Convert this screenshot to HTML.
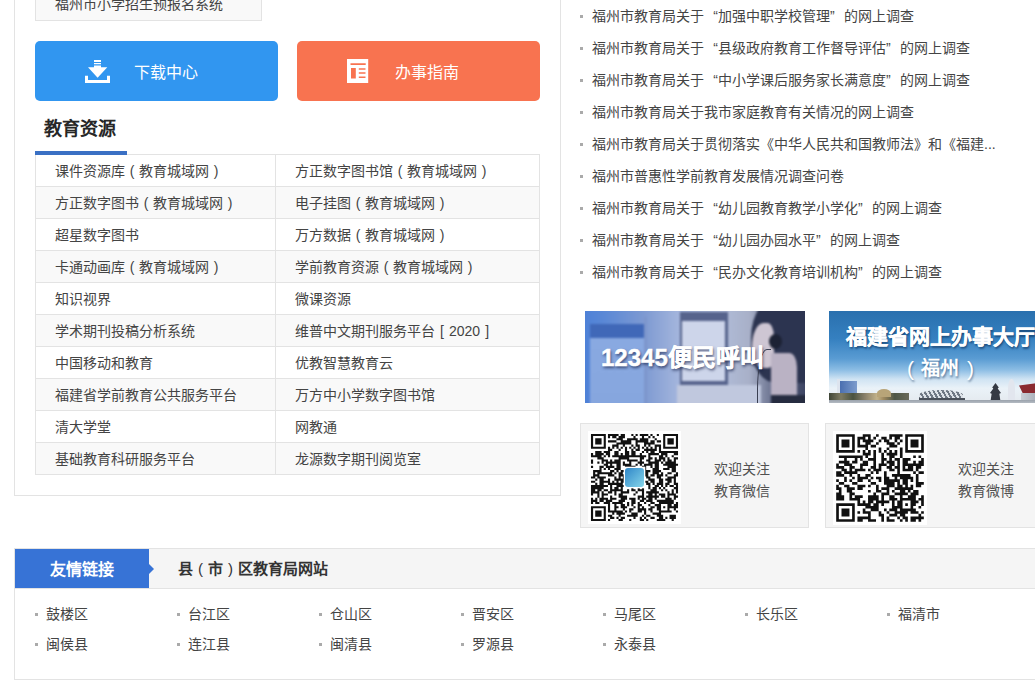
<!DOCTYPE html>
<html lang="zh-CN">
<head>
<meta charset="utf-8">
<style>
*{margin:0;padding:0;box-sizing:border-box}
html,body{width:1035px;height:681px;overflow:hidden;background:#fff}
body{position:relative;font-family:"Liberation Sans",sans-serif;font-size:14px;color:#444}
.p{display:inline-block;width:14px;text-align:center}
.p15{display:inline-block;width:15px;text-align:center;font-weight:normal}
.abs{position:absolute}
.q{display:inline-block;width:14px}
.ql{text-align:right}
.qr{text-align:left}
/* left panel */
#lp{left:14px;top:-20px;width:547px;height:516px;border:1px solid #e3e3e3}
#topbox{left:35px;top:-12px;width:227px;height:33px;border:1px solid #e3e3e3;border-top:none;background:#f9f9f9;line-height:32px;padding-left:19px}
.btn{top:41px;width:243px;height:60px;border-radius:5px;color:#fff;font-size:16px;line-height:60px}
#b1{left:35px;background:#3196f0}
#b2{left:297px;background:#f87350}
#b1 span{position:absolute;left:99px;top:2px}
#b2 span{position:absolute;left:98px;top:2px}
#h1{left:44px;top:115px;font-size:18px;font-weight:bold;line-height:28px;color:#262626}
#hbar{left:35px;top:151px;width:92px;height:4px;background:#3a70c4}
#tbl{left:35px;top:154px;width:505px;border-collapse:collapse}
#tbl td{height:32px;border:1px solid #e3e3e3;padding:1px 0 0 19px;line-height:30px;white-space:nowrap}
#tbl td.c1{width:240px}
#tbl tr:nth-child(even) td{background:#f9f9f9}
/* right list */
#rl{left:580px;top:0;width:420px}
#rl li{list-style:none;position:relative;height:32px;line-height:32px;padding-left:12px;white-space:nowrap;width:440px}
#rl li:before{content:"";position:absolute;left:0;top:15px;width:3px;height:3px;background:#aaa}
/* banners */
.ban{top:311px;width:220px;height:92px;overflow:hidden}
#ban1{left:585px}
#ban2{left:829px}
.qrb{top:423px;width:229px;height:105px;border:1px solid #e3e3e3;background:#f5f5f5}
#qrb1{left:580px}
#qrb2{left:825px}
.qrb svg{position:absolute;left:6.8px;top:6.8px}
.qrb .t{position:absolute;left:133px;top:33.5px;line-height:22px;font-size:14px;color:#505050}
/* friend links */
#fl{left:14px;top:548px;width:1100px;height:132px;border:1px solid #e3e3e3}
#flh{left:0;top:0;width:100%;height:40px;background:#f5f5f5;border-bottom:1px solid #e3e3e3}
#fltab{left:0;top:0;width:134px;height:39px;background:#3773d6;color:#fff;font-size:16px;font-weight:bold;line-height:41px;text-align:center}
#fltab:after{content:"";position:absolute;right:-5px;top:15px;border-left:5px solid #3773d6;border-top:5px solid transparent;border-bottom:5px solid transparent}
#flt{left:163px;top:0;line-height:40px;font-size:15px;font-weight:bold;color:#333}
.lk{position:absolute;line-height:30px;padding-left:11px;white-space:nowrap}
.lk:before{content:"";position:absolute;left:0;top:14px;width:3px;height:3px;background:#aaa}
</style>
</head>
<body>
<div class="abs" id="lp"></div>
<div class="abs" id="topbox">福州市小学招生预报名系统</div>

<div class="abs btn" id="b1">
<svg class="abs" style="left:49px;top:17px" width="28" height="26" viewBox="0 0 28 26">
<path fill="#fff" d="M10 2h7v2h-7zM10 5h7v1.3h-7zM10 7.4h7v1.9h6.3l-9.7 10.5-9.6-10.5h6zM1 17.8h3v4.2h19v-4.2h3v7.2h-25z"/>
</svg>
<span>下载中心</span></div>
<div class="abs btn" id="b2">
<svg class="abs" style="left:50px;top:18px" width="22" height="24" viewBox="0 0 22 24">
<path fill="#fff" fill-rule="evenodd" d="M0 0h21.2v24h-21.2zM3.5 4.3h15.2v1.7h-15.2zM4 9h4.8v10.5h-4.8zM11.8 9.2h6.7v1.5h-6.7zM11.8 13.3h6.7v1.5h-6.7zM11.8 17.6h6.7v1.5h-6.7z"/>
</svg>
<span>办事指南</span></div>

<div class="abs" id="h1">教育资源</div>
<table class="abs" id="tbl">
<tr><td class="c1">课件资源库<span class="p">(</span>教育城域网<span class="p">)</span></td><td>方正数字图书馆<span class="p">(</span>教育城域网<span class="p">)</span></td></tr>
<tr><td class="c1">方正数字图书<span class="p">(</span>教育城域网<span class="p">)</span></td><td>电子挂图<span class="p">(</span>教育城域网<span class="p">)</span></td></tr>
<tr><td class="c1">超星数字图书</td><td>万方数据<span class="p">(</span>教育城域网<span class="p">)</span></td></tr>
<tr><td class="c1">卡通动画库<span class="p">(</span>教育城域网<span class="p">)</span></td><td>学前教育资源<span class="p">(</span>教育城域网<span class="p">)</span></td></tr>
<tr><td class="c1">知识视界</td><td>微课资源</td></tr>
<tr><td class="c1">学术期刊投稿分析系统</td><td>维普中文期刊服务平台<span class="p">[</span>2020<span class="p">]</span></td></tr>
<tr><td class="c1">中国移动和教育</td><td>优教智慧教育云</td></tr>
<tr><td class="c1">福建省学前教育公共服务平台</td><td>万方中小学数字图书馆</td></tr>
<tr><td class="c1">清大学堂</td><td>网教通</td></tr>
<tr><td class="c1">基础教育科研服务平台</td><td>龙源数字期刊阅览室</td></tr>
</table>
<div class="abs" id="hbar"></div>

<ul class="abs" id="rl">
<li>福州市教育局关于<span class="q ql">“</span>加强中职学校管理<span class="q qr">”</span>的网上调查</li>
<li>福州市教育局关于<span class="q ql">“</span>县级政府教育工作督导评估<span class="q qr">”</span>的网上调查</li>
<li>福州市教育局关于<span class="q ql">“</span>中小学课后服务家长满意度<span class="q qr">”</span>的网上调查</li>
<li>福州市教育局关于我市家庭教育有关情况的网上调查</li>
<li>福州市教育局关于贯彻落实《中华人民共和国教师法》和《福建...</li>
<li>福州市普惠性学前教育发展情况调查问卷</li>
<li>福州市教育局关于<span class="q ql">“</span>幼儿园教育教学小学化<span class="q qr">”</span>的网上调查</li>
<li>福州市教育局关于<span class="q ql">“</span>幼儿园办园水平<span class="q qr">”</span>的网上调查</li>
<li>福州市教育局关于<span class="q ql">“</span>民办文化教育培训机构<span class="q qr">”</span>的网上调查</li>
</ul>

<div class="abs ban" id="ban1">
<div style="position:absolute;left:-4px;top:-4px;width:228px;height:100px;filter:blur(1.3px)">
<div style="position:absolute;left:0;top:0;width:228px;height:100px;background:linear-gradient(90deg,#4c80d8 0%,#5a88d6 10%,#7e9ad2 28%,#a2b4dc 42%,#b0bcd8 62%,#a8b0c8 74%,#5c6482 86%,#3a4260 100%)"></div>
<div style="position:absolute;left:9px;top:17px;width:54px;height:83px;background:linear-gradient(180deg,#8aaae2,#86a6de)"></div>
<div style="position:absolute;left:9px;top:17px;width:54px;height:14px;background:#4068b8"></div>
<div style="position:absolute;left:63px;top:10px;width:3px;height:90px;background:#7d96cc"></div>
<div style="position:absolute;left:99px;top:5px;width:48px;height:73px;background:#56638c"></div>
<div style="position:absolute;left:101px;top:14px;width:43px;height:60px;background:#cdd5ea"></div>
<div style="position:absolute;left:96px;top:78px;width:84px;height:22px;background:#c0c8de"></div>
<div style="position:absolute;left:170px;top:-14px;width:64px;height:90px;background:#2c3450;border-radius:50% 0 0 40%"></div>
<div style="position:absolute;left:171px;top:16px;width:22px;height:45px;background:#cec6d3;border-radius:60% 35% 30% 55%"></div>
<div style="position:absolute;left:190px;top:46px;width:26px;height:46px;background:#bab2c4;border-radius:0 30% 0 0"></div>
<div style="position:absolute;left:188px;top:27px;width:13px;height:15px;background:#1c2234;border-radius:50%"></div>
<div style="position:absolute;left:190px;top:88px;width:40px;height:12px;background:#262c40"></div>
</div>
<div style="position:absolute;left:172px;top:38px;width:14px;height:58px;border-left:1.5px solid #3a3f52;border-top:1.5px solid #3a3f52;border-radius:70% 0 0 0;filter:blur(.4px)"></div>
<div style="position:absolute;left:16px;top:29px;font-size:24px;font-weight:bold;color:#fff;line-height:36px;white-space:nowrap;text-shadow:1px 2px 3px rgba(20,30,70,.7);-webkit-text-stroke:.4px #fff">12345便民呼叫</div>

</div>
<div class="abs ban" id="ban2">
<div style="position:absolute;left:0;top:0;width:220px;height:92px;background:linear-gradient(180deg,#2a70ae 0%,#3580c0 30%,#5a9cd3 52%,#8cbde4 64%,#cfe3f3 74%,#eaf2f8 84%,#e4e9ee 100%)"></div>
<div style="position:absolute;left:-4px;top:60px;width:228px;height:36px;filter:blur(.7px)">
<div style="position:absolute;left:12px;top:8px;width:3px;height:16px;background:#dde4ee"></div>
<div style="position:absolute;left:15px;top:10px;width:17px;height:15px;background:linear-gradient(90deg,#4a6fb0,#7d9ccc)"></div>
<div style="position:absolute;left:4px;top:22px;width:80px;height:8px;background:linear-gradient(90deg,#3f4536 0%,#7d7a62 15%,#4a5240 30%,#8a806a 45%,#c2b28a 60%,#a08a60 68%,#4e5646 82%,#6a6a5a 100%)"></div>
<div style="position:absolute;left:52px;top:18px;width:14px;height:8px;background:#b8a478;border-radius:50% 50% 0 0"></div>
<div style="position:absolute;left:94px;top:19px;width:44px;height:10px;background:repeating-linear-gradient(60deg,#6f7884 0 2px,#dde2e8 2px 4px);border-radius:50% 50% 25% 25%"></div>
<div style="position:absolute;left:94px;top:27px;width:46px;height:3px;background:#4a505a"></div>
<div style="position:absolute;left:165px;top:12px;width:11px;height:18px;background:#353a44;clip-path:polygon(50% 0,80% 25%,70% 30%,100% 55%,85% 60%,95% 100%,5% 100%,15% 60%,0 55%,30% 30%,20% 25%)"></div>
<div style="position:absolute;left:183px;top:8px;width:7px;height:22px;background:#e2e6ee;border-radius:45% 45% 10% 10%"></div>
<div style="position:absolute;left:194px;top:10px;width:34px;height:13px;background:#8a2a30;clip-path:polygon(0 35%,100% 0,100% 80%,12% 100%)"></div>
<div style="position:absolute;left:196px;top:22px;width:30px;height:8px;background:linear-gradient(90deg,#c9ced6,#8c939e)"></div>
<div style="position:absolute;left:0;top:29px;width:228px;height:7px;background:linear-gradient(180deg,#9aa2ac,#d6dbe0)"></div>
</div>
<div style="position:absolute;left:17px;top:13px;font-size:21px;font-weight:bold;color:#fff;line-height:26px;white-space:nowrap;text-shadow:1px 2px 2px rgba(10,40,80,.6);-webkit-text-stroke:.3px #fff">福建省网上办事大厅</div>
<div style="position:absolute;left:78px;top:45px;font-size:21px;font-weight:normal;color:#fff;line-height:26px;white-space:nowrap;text-shadow:1px 2px 2px rgba(10,40,80,.45)">(</div>
<div style="position:absolute;left:92px;top:45px;font-size:19px;font-weight:bold;color:#fff;line-height:26px;white-space:nowrap;text-shadow:1px 2px 2px rgba(10,40,80,.45)">福州</div>
<div style="position:absolute;left:138px;top:45px;font-size:21px;font-weight:normal;color:#fff;line-height:26px;white-space:nowrap;text-shadow:1px 2px 2px rgba(10,40,80,.45)">)</div>

</div>

<div class="abs qrb" id="qrb1">
<svg width="93" height="93" viewBox="-1.4 -1.4 43.8 43.8"><rect x="-1.4" y="-1.4" width="43.8" height="43.8" fill="#fff"/><path fill="#111" d="M0 0h7v1h-7zM8 0h5v1h-5zM14 0h2v1h-2zM19 0h1v1h-1zM21 0h1v1h-1zM23 0h4v1h-4zM28 0h1v1h-1zM31 0h1v1h-1zM34 0h7v1h-7zM0 1h1v1h-1zM6 1h1v1h-1zM8 1h1v1h-1zM10 1h2v1h-2zM13 1h3v1h-3zM20 1h1v1h-1zM24 1h1v1h-1zM27 1h1v1h-1zM29 1h1v1h-1zM34 1h1v1h-1zM40 1h1v1h-1zM0 2h1v1h-1zM2 2h3v1h-3zM6 2h1v1h-1zM12 2h3v1h-3zM17 2h5v1h-5zM23 2h4v1h-4zM30 2h1v1h-1zM34 2h1v1h-1zM36 2h3v1h-3zM40 2h1v1h-1zM0 3h1v1h-1zM2 3h3v1h-3zM6 3h1v1h-1zM8 3h4v1h-4zM14 3h5v1h-5zM21 3h6v1h-6zM28 3h2v1h-2zM31 3h2v1h-2zM34 3h1v1h-1zM36 3h3v1h-3zM40 3h1v1h-1zM0 4h1v1h-1zM2 4h3v1h-3zM6 4h1v1h-1zM12 4h7v1h-7zM21 4h1v1h-1zM25 4h5v1h-5zM34 4h1v1h-1zM36 4h3v1h-3zM40 4h1v1h-1zM0 5h1v1h-1zM6 5h1v1h-1zM10 5h3v1h-3zM15 5h1v1h-1zM19 5h1v1h-1zM21 5h2v1h-2zM25 5h1v1h-1zM27 5h1v1h-1zM30 5h3v1h-3zM34 5h1v1h-1zM40 5h1v1h-1zM0 6h7v1h-7zM8 6h1v1h-1zM10 6h1v1h-1zM12 6h1v1h-1zM14 6h1v1h-1zM16 6h1v1h-1zM18 6h1v1h-1zM20 6h1v1h-1zM22 6h1v1h-1zM24 6h1v1h-1zM26 6h1v1h-1zM28 6h1v1h-1zM30 6h1v1h-1zM32 6h1v1h-1zM34 6h7v1h-7zM8 7h2v1h-2zM13 7h1v1h-1zM16 7h1v1h-1zM19 7h1v1h-1zM21 7h2v1h-2zM25 7h6v1h-6zM32 7h1v1h-1zM2 8h3v1h-3zM6 8h3v1h-3zM11 8h2v1h-2zM16 8h2v1h-2zM19 8h2v1h-2zM24 8h1v1h-1zM26 8h1v1h-1zM28 8h2v1h-2zM32 8h9v1h-9zM0 9h1v1h-1zM2 9h4v1h-4zM7 9h2v1h-2zM11 9h2v1h-2zM14 9h1v1h-1zM16 9h2v1h-2zM19 9h2v1h-2zM23 9h1v1h-1zM27 9h5v1h-5zM33 9h3v1h-3zM39 9h2v1h-2zM0 10h5v1h-5zM6 10h1v1h-1zM8 10h1v1h-1zM10 10h16v1h-16zM27 10h1v1h-1zM32 10h2v1h-2zM35 10h1v1h-1zM38 10h1v1h-1zM3 11h3v1h-3zM13 11h5v1h-5zM23 11h2v1h-2zM27 11h2v1h-2zM30 11h1v1h-1zM32 11h3v1h-3zM36 11h1v1h-1zM39 11h2v1h-2zM0 12h1v1h-1zM5 12h3v1h-3zM9 12h1v1h-1zM11 12h3v1h-3zM17 12h5v1h-5zM23 12h1v1h-1zM26 12h2v1h-2zM30 12h3v1h-3zM34 12h1v1h-1zM36 12h2v1h-2zM39 12h1v1h-1zM0 13h1v1h-1zM3 13h1v1h-1zM5 13h1v1h-1zM7 13h7v1h-7zM15 13h1v1h-1zM18 13h1v1h-1zM22 13h3v1h-3zM27 13h5v1h-5zM33 13h1v1h-1zM35 13h5v1h-5zM6 14h2v1h-2zM9 14h1v1h-1zM12 14h2v1h-2zM15 14h4v1h-4zM21 14h1v1h-1zM23 14h1v1h-1zM25 14h4v1h-4zM30 14h2v1h-2zM34 14h7v1h-7zM0 15h1v1h-1zM4 15h2v1h-2zM7 15h4v1h-4zM12 15h2v1h-2zM16 15h5v1h-5zM24 15h2v1h-2zM28 15h1v1h-1zM30 15h2v1h-2zM36 15h4v1h-4zM4 16h1v1h-1zM6 16h1v1h-1zM8 16h1v1h-1zM11 16h3v1h-3zM16 16h3v1h-3zM20 16h2v1h-2zM23 16h3v1h-3zM29 16h3v1h-3zM34 16h3v1h-3zM38 16h2v1h-2zM1 17h4v1h-4zM9 17h2v1h-2zM12 17h1v1h-1zM14 17h2v1h-2zM17 17h1v1h-1zM19 17h4v1h-4zM25 17h3v1h-3zM29 17h4v1h-4zM38 17h2v1h-2zM1 18h1v1h-1zM3 18h7v1h-7zM11 18h1v1h-1zM13 18h2v1h-2zM17 18h4v1h-4zM22 18h2v1h-2zM25 18h2v1h-2zM29 18h3v1h-3zM33 18h1v1h-1zM36 18h2v1h-2zM40 18h1v1h-1zM1 19h3v1h-3zM8 19h3v1h-3zM13 19h4v1h-4zM18 19h1v1h-1zM24 19h3v1h-3zM28 19h2v1h-2zM31 19h3v1h-3zM35 19h1v1h-1zM39 19h2v1h-2zM0 20h2v1h-2zM3 20h4v1h-4zM11 20h1v1h-1zM13 20h1v1h-1zM15 20h1v1h-1zM17 20h4v1h-4zM23 20h2v1h-2zM26 20h2v1h-2zM31 20h2v1h-2zM36 20h4v1h-4zM2 21h1v1h-1zM4 21h2v1h-2zM8 21h1v1h-1zM11 21h5v1h-5zM18 21h3v1h-3zM22 21h3v1h-3zM27 21h3v1h-3zM32 21h2v1h-2zM35 21h3v1h-3zM39 21h1v1h-1zM0 22h2v1h-2zM4 22h5v1h-5zM10 22h1v1h-1zM12 22h1v1h-1zM14 22h3v1h-3zM20 22h1v1h-1zM22 22h5v1h-5zM28 22h2v1h-2zM32 22h2v1h-2zM36 22h2v1h-2zM39 22h1v1h-1zM2 23h1v1h-1zM4 23h2v1h-2zM8 23h7v1h-7zM17 23h1v1h-1zM20 23h1v1h-1zM22 23h1v1h-1zM26 23h2v1h-2zM29 23h1v1h-1zM31 23h3v1h-3zM35 23h2v1h-2zM39 23h2v1h-2zM0 24h8v1h-8zM9 24h1v1h-1zM12 24h4v1h-4zM17 24h1v1h-1zM22 24h1v1h-1zM24 24h1v1h-1zM27 24h1v1h-1zM30 24h2v1h-2zM33 24h1v1h-1zM35 24h1v1h-1zM37 24h2v1h-2zM40 24h1v1h-1zM0 25h6v1h-6zM9 25h1v1h-1zM11 25h2v1h-2zM14 25h1v1h-1zM19 25h1v1h-1zM22 25h1v1h-1zM24 25h1v1h-1zM27 25h1v1h-1zM29 25h2v1h-2zM32 25h1v1h-1zM34 25h1v1h-1zM39 25h2v1h-2zM0 26h2v1h-2zM3 26h2v1h-2zM6 26h2v1h-2zM9 26h6v1h-6zM17 26h1v1h-1zM19 26h2v1h-2zM22 26h3v1h-3zM28 26h3v1h-3zM33 26h1v1h-1zM35 26h1v1h-1zM38 26h1v1h-1zM40 26h1v1h-1zM0 27h4v1h-4zM5 27h1v1h-1zM8 27h2v1h-2zM11 27h1v1h-1zM14 27h4v1h-4zM21 27h1v1h-1zM24 27h1v1h-1zM26 27h6v1h-6zM36 27h1v1h-1zM38 27h1v1h-1zM40 27h1v1h-1zM0 28h1v1h-1zM3 28h1v1h-1zM5 28h3v1h-3zM11 28h1v1h-1zM13 28h2v1h-2zM20 28h1v1h-1zM24 28h1v1h-1zM27 28h2v1h-2zM30 28h1v1h-1zM32 28h3v1h-3zM36 28h4v1h-4zM3 29h1v1h-1zM5 29h1v1h-1zM9 29h1v1h-1zM13 29h4v1h-4zM22 29h3v1h-3zM26 29h6v1h-6zM33 29h2v1h-2zM36 29h1v1h-1zM39 29h2v1h-2zM0 30h1v1h-1zM2 30h1v1h-1zM4 30h4v1h-4zM9 30h3v1h-3zM14 30h3v1h-3zM18 30h3v1h-3zM22 30h1v1h-1zM24 30h2v1h-2zM27 30h2v1h-2zM30 30h1v1h-1zM35 30h3v1h-3zM39 30h1v1h-1zM0 31h3v1h-3zM4 31h2v1h-2zM7 31h3v1h-3zM13 31h3v1h-3zM19 31h2v1h-2zM23 31h2v1h-2zM26 31h3v1h-3zM31 31h8v1h-8zM0 32h1v1h-1zM2 32h2v1h-2zM6 32h3v1h-3zM10 32h5v1h-5zM17 32h1v1h-1zM19 32h2v1h-2zM22 32h1v1h-1zM25 32h1v1h-1zM28 32h2v1h-2zM32 32h7v1h-7zM40 32h1v1h-1zM8 33h1v1h-1zM11 33h1v1h-1zM14 33h2v1h-2zM17 33h1v1h-1zM19 33h1v1h-1zM22 33h2v1h-2zM27 33h1v1h-1zM30 33h3v1h-3zM36 33h2v1h-2zM39 33h2v1h-2zM0 34h7v1h-7zM8 34h1v1h-1zM11 34h2v1h-2zM14 34h3v1h-3zM20 34h1v1h-1zM22 34h1v1h-1zM24 34h1v1h-1zM28 34h2v1h-2zM31 34h2v1h-2zM34 34h1v1h-1zM36 34h5v1h-5zM0 35h1v1h-1zM6 35h1v1h-1zM8 35h1v1h-1zM11 35h1v1h-1zM15 35h1v1h-1zM18 35h2v1h-2zM22 35h4v1h-4zM27 35h2v1h-2zM31 35h2v1h-2zM36 35h1v1h-1zM39 35h1v1h-1zM0 36h1v1h-1zM2 36h3v1h-3zM6 36h1v1h-1zM8 36h7v1h-7zM16 36h1v1h-1zM18 36h1v1h-1zM22 36h2v1h-2zM25 36h1v1h-1zM28 36h1v1h-1zM32 36h6v1h-6zM40 36h1v1h-1zM0 37h1v1h-1zM2 37h3v1h-3zM6 37h1v1h-1zM10 37h1v1h-1zM12 37h4v1h-4zM19 37h3v1h-3zM25 37h1v1h-1zM29 37h4v1h-4zM0 38h1v1h-1zM2 38h3v1h-3zM6 38h1v1h-1zM8 38h2v1h-2zM13 38h1v1h-1zM17 38h5v1h-5zM24 38h1v1h-1zM26 38h2v1h-2zM31 38h3v1h-3zM37 38h3v1h-3zM0 39h1v1h-1zM6 39h1v1h-1zM9 39h2v1h-2zM12 39h1v1h-1zM14 39h2v1h-2zM20 39h1v1h-1zM23 39h1v1h-1zM25 39h1v1h-1zM28 39h2v1h-2zM32 39h2v1h-2zM35 39h1v1h-1zM37 39h3v1h-3zM0 40h7v1h-7zM8 40h1v1h-1zM13 40h2v1h-2zM18 40h1v1h-1zM23 40h2v1h-2zM26 40h1v1h-1zM31 40h4v1h-4zM38 40h1v1h-1z"/><rect x="15.4" y="15.4" width="10.2" height="10.2" fill="#fff"/></svg><div style="position:absolute;left:43.5px;top:43.5px;width:19.5px;height:19.5px;border-radius:3px;background:linear-gradient(135deg,#2f86c8,#86d6ea)"></div>
<div class="t">欢迎关注<br>教育微信</div>
</div>
<div class="abs qrb" id="qrb2">
<svg width="94" height="94" viewBox="-1.2 -1.2 35.4 35.4"><rect x="-1.2" y="-1.2" width="35.4" height="35.4" fill="#fff"/><path fill="#111" d="M0 0h7v1h-7zM10 0h3v1h-3zM15 0h1v1h-1zM20 0h5v1h-5zM26 0h7v1h-7zM0 1h1v1h-1zM6 1h1v1h-1zM8 1h3v1h-3zM12 1h1v1h-1zM14 1h1v1h-1zM17 1h2v1h-2zM20 1h1v1h-1zM22 1h2v1h-2zM26 1h1v1h-1zM32 1h1v1h-1zM0 2h1v1h-1zM2 2h3v1h-3zM6 2h1v1h-1zM8 2h1v1h-1zM10 2h4v1h-4zM16 2h1v1h-1zM18 2h2v1h-2zM22 2h1v1h-1zM24 2h1v1h-1zM26 2h1v1h-1zM28 2h3v1h-3zM32 2h1v1h-1zM0 3h1v1h-1zM2 3h3v1h-3zM6 3h1v1h-1zM8 3h1v1h-1zM11 3h2v1h-2zM15 3h1v1h-1zM19 3h3v1h-3zM23 3h1v1h-1zM26 3h1v1h-1zM28 3h3v1h-3zM32 3h1v1h-1zM0 4h1v1h-1zM2 4h3v1h-3zM6 4h1v1h-1zM8 4h4v1h-4zM13 4h2v1h-2zM20 4h3v1h-3zM26 4h1v1h-1zM28 4h3v1h-3zM32 4h1v1h-1zM0 5h1v1h-1zM6 5h1v1h-1zM11 5h1v1h-1zM16 5h1v1h-1zM19 5h1v1h-1zM24 5h1v1h-1zM26 5h1v1h-1zM32 5h1v1h-1zM0 6h7v1h-7zM8 6h1v1h-1zM10 6h1v1h-1zM12 6h1v1h-1zM14 6h1v1h-1zM16 6h1v1h-1zM18 6h1v1h-1zM20 6h1v1h-1zM22 6h1v1h-1zM24 6h1v1h-1zM26 6h7v1h-7zM10 7h3v1h-3zM14 7h1v1h-1zM17 7h1v1h-1zM19 7h4v1h-4zM24 7h1v1h-1zM1 8h9v1h-9zM11 8h1v1h-1zM14 8h1v1h-1zM17 8h1v1h-1zM20 8h2v1h-2zM24 8h1v1h-1zM29 8h1v1h-1zM31 8h1v1h-1zM3 9h1v1h-1zM7 9h1v1h-1zM9 9h1v1h-1zM12 9h3v1h-3zM17 9h2v1h-2zM20 9h1v1h-1zM22 9h2v1h-2zM25 9h3v1h-3zM32 9h1v1h-1zM1 10h4v1h-4zM6 10h2v1h-2zM10 10h2v1h-2zM14 10h1v1h-1zM17 10h1v1h-1zM19 10h3v1h-3zM23 10h1v1h-1zM25 10h2v1h-2zM29 10h1v1h-1zM31 10h2v1h-2zM0 11h1v1h-1zM3 11h3v1h-3zM9 11h3v1h-3zM14 11h1v1h-1zM16 11h3v1h-3zM20 11h2v1h-2zM23 11h1v1h-1zM25 11h8v1h-8zM0 12h3v1h-3zM5 12h2v1h-2zM9 12h1v1h-1zM13 12h2v1h-2zM16 12h1v1h-1zM19 12h2v1h-2zM22 12h2v1h-2zM25 12h1v1h-1zM27 12h2v1h-2zM30 12h2v1h-2zM2 13h2v1h-2zM5 13h1v1h-1zM7 13h4v1h-4zM12 13h1v1h-1zM14 13h3v1h-3zM20 13h2v1h-2zM23 13h1v1h-1zM25 13h4v1h-4zM30 13h1v1h-1zM0 14h2v1h-2zM3 14h5v1h-5zM13 14h1v1h-1zM15 14h1v1h-1zM18 14h1v1h-1zM23 14h1v1h-1zM29 14h1v1h-1zM31 14h2v1h-2zM0 15h3v1h-3zM5 15h1v1h-1zM8 15h1v1h-1zM11 15h2v1h-2zM18 15h1v1h-1zM21 15h7v1h-7zM30 15h1v1h-1zM3 16h1v1h-1zM6 16h1v1h-1zM8 16h4v1h-4zM13 16h1v1h-1zM15 16h2v1h-2zM18 16h2v1h-2zM22 16h1v1h-1zM24 16h5v1h-5zM30 16h1v1h-1zM0 17h1v1h-1zM3 17h1v1h-1zM5 17h1v1h-1zM8 17h2v1h-2zM12 17h1v1h-1zM16 17h1v1h-1zM18 17h6v1h-6zM25 17h2v1h-2zM28 17h1v1h-1zM30 17h1v1h-1zM1 18h2v1h-2zM6 18h2v1h-2zM13 18h2v1h-2zM18 18h4v1h-4zM23 18h1v1h-1zM25 18h2v1h-2zM30 18h3v1h-3zM0 19h1v1h-1zM3 19h2v1h-2zM8 19h3v1h-3zM12 19h1v1h-1zM15 19h1v1h-1zM19 19h3v1h-3zM23 19h2v1h-2zM26 19h1v1h-1zM28 19h1v1h-1zM30 19h2v1h-2zM0 20h2v1h-2zM4 20h3v1h-3zM8 20h2v1h-2zM15 20h1v1h-1zM17 20h3v1h-3zM22 20h7v1h-7zM1 21h1v1h-1zM4 21h2v1h-2zM12 21h1v1h-1zM15 21h2v1h-2zM19 21h1v1h-1zM21 21h1v1h-1zM24 21h2v1h-2zM27 21h1v1h-1zM29 21h2v1h-2zM0 22h2v1h-2zM5 22h2v1h-2zM14 22h1v1h-1zM17 22h3v1h-3zM22 22h5v1h-5zM28 22h3v1h-3zM0 23h3v1h-3zM5 23h1v1h-1zM7 23h3v1h-3zM12 23h4v1h-4zM17 23h1v1h-1zM20 23h2v1h-2zM24 23h1v1h-1zM27 23h3v1h-3zM32 23h1v1h-1zM0 24h3v1h-3zM5 24h4v1h-4zM12 24h4v1h-4zM17 24h1v1h-1zM20 24h3v1h-3zM24 24h6v1h-6zM31 24h2v1h-2zM8 25h1v1h-1zM10 25h1v1h-1zM12 25h2v1h-2zM15 25h5v1h-5zM21 25h1v1h-1zM23 25h2v1h-2zM28 25h3v1h-3zM32 25h1v1h-1zM0 26h7v1h-7zM8 26h5v1h-5zM14 26h2v1h-2zM17 26h1v1h-1zM21 26h1v1h-1zM23 26h2v1h-2zM26 26h1v1h-1zM28 26h2v1h-2zM32 26h1v1h-1zM0 27h1v1h-1zM6 27h1v1h-1zM11 27h5v1h-5zM21 27h4v1h-4zM28 27h1v1h-1zM31 27h1v1h-1zM0 28h1v1h-1zM2 28h3v1h-3zM6 28h1v1h-1zM10 28h1v1h-1zM13 28h3v1h-3zM18 28h1v1h-1zM20 28h3v1h-3zM24 28h6v1h-6zM0 29h1v1h-1zM2 29h3v1h-3zM6 29h1v1h-1zM8 29h1v1h-1zM10 29h3v1h-3zM16 29h1v1h-1zM19 29h1v1h-1zM22 29h5v1h-5zM28 29h3v1h-3zM32 29h1v1h-1zM0 30h1v1h-1zM2 30h3v1h-3zM6 30h1v1h-1zM12 30h1v1h-1zM16 30h2v1h-2zM20 30h3v1h-3zM24 30h2v1h-2zM31 30h1v1h-1zM0 31h1v1h-1zM6 31h1v1h-1zM8 31h5v1h-5zM17 31h1v1h-1zM19 31h1v1h-1zM23 31h1v1h-1zM25 31h2v1h-2zM28 31h5v1h-5zM0 32h7v1h-7zM8 32h2v1h-2zM12 32h3v1h-3zM17 32h1v1h-1zM19 32h3v1h-3zM24 32h1v1h-1zM26 32h1v1h-1zM28 32h2v1h-2zM31 32h1v1h-1z"/></svg>
<div class="t" style="left:132px">欢迎关注<br>教育微博</div>
</div>

<div class="abs" id="fl">
<div class="abs" id="flh"></div>
<div class="abs" id="fltab">友情链接</div>
<div class="abs" id="flt">县<span class="p15">(</span>市<span class="p15">)</span>区教育局网站</div>
<div class="lk" style="left:20px;top:50px">鼓楼区</div>
<div class="lk" style="left:162px;top:50px">台江区</div>
<div class="lk" style="left:304px;top:50px">仓山区</div>
<div class="lk" style="left:446px;top:50px">晋安区</div>
<div class="lk" style="left:588px;top:50px">马尾区</div>
<div class="lk" style="left:730px;top:50px">长乐区</div>
<div class="lk" style="left:872px;top:50px">福清市</div>
<div class="lk" style="left:20px;top:80px">闽侯县</div>
<div class="lk" style="left:162px;top:80px">连江县</div>
<div class="lk" style="left:304px;top:80px">闽清县</div>
<div class="lk" style="left:446px;top:80px">罗源县</div>
<div class="lk" style="left:588px;top:80px">永泰县</div>
</div>
</body>
</html>
